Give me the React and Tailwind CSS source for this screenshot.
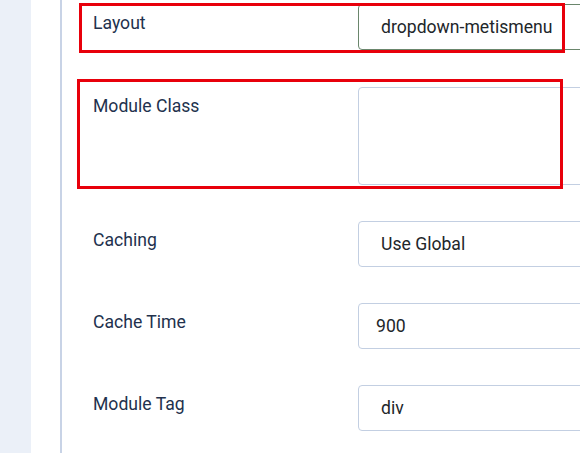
import React from 'react';

const rows = [
  { label: 'Caching', value: 'Use Global', pad: 'pl-[22px]' },
  { label: 'Cache Time', value: '900', pad: 'pl-[17px]' },
  { label: 'Module Tag', value: 'div', pad: 'pl-[22px]' },
];

const Field = ({ label, children, className = '' }) => (
  <div className={`flex ${className}`}>
    <div className="w-[265px] shrink-0 pt-[6px] leading-[26px] text-[17.6px] text-[#22314d]">{label}</div>
    {children}
  </div>
);

const App = () => {
  return (
    <div
      className="relative flex h-[453px] w-[580px] overflow-hidden bg-white"
      style={{ fontFamily: 'Roboto, "Liberation Sans", sans-serif' }}
    >
      <div className="w-[31px] shrink-0 bg-[#ebf0f8]" />
      <div className="w-[31px] shrink-0 border-r-2 border-[#c8d3e6]" />

      <div className="flex-1 pl-[31px] pt-[4px]">
        <Field label="Layout">
          <div className="flex h-[46px] w-[280px] shrink-0 items-center rounded-[4px] border border-[#6a866c] pl-[22px] text-[17.6px] text-[#22262a]">
            dropdown-metismenu
          </div>
        </Field>

        <Field label="Module Class" className="mt-[37px]">
          <div className="h-[98px] w-[280px] shrink-0 rounded-[4px] border border-[#c3cfe2]" />
        </Field>

        {rows.map((r) => (
          <Field key={r.label} label={r.label} className="mt-[36px]">
            <div className={`flex h-[46px] w-[280px] shrink-0 items-center rounded-[4px] border border-[#c3cfe2] ${r.pad} text-[17.6px] text-[#22262a]`}>
              {r.value}
            </div>
          </Field>
        ))}
      </div>

      {/* annotation boxes */}
      <div className="pointer-events-none absolute left-[79px] top-[3px] h-[50px] w-[486px] border-[3px] border-[#e8000b]" />
      <div className="pointer-events-none absolute left-[77px] top-[79px] h-[110px] w-[486px] border-[3px] border-[#e8000b]" />
    </div>
  );
};

export default App;
